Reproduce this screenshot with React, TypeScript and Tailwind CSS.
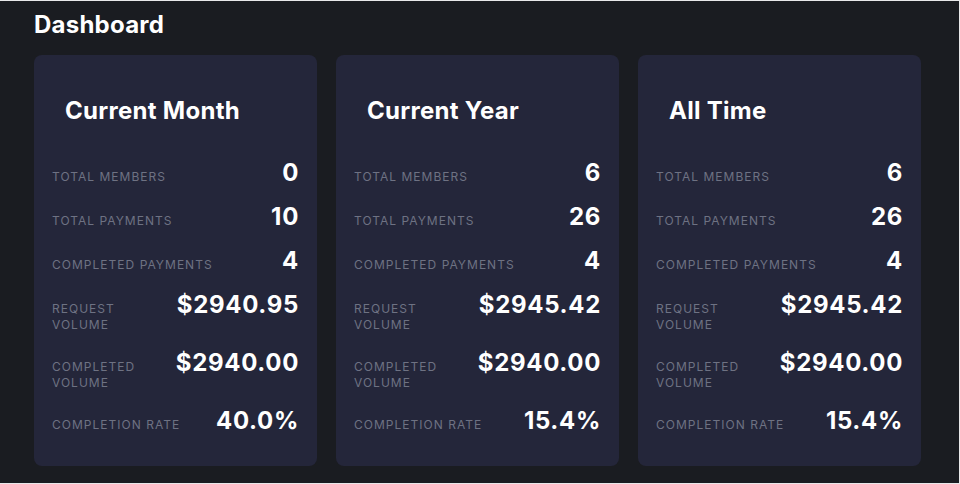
import React from "react";

type Stat = { label: string; value: string };

const cards: { title: string; stats: Stat[] }[] = [
  {
    title: "Current Month",
    stats: [
      { label: "Total Members", value: "0" },
      { label: "Total Payments", value: "10" },
      { label: "Completed Payments", value: "4" },
      { label: "Request Volume", value: "$2940.95" },
      { label: "Completed Volume", value: "$2940.00" },
      { label: "Completion Rate", value: "40.0%" },
    ],
  },
  {
    title: "Current Year",
    stats: [
      { label: "Total Members", value: "6" },
      { label: "Total Payments", value: "26" },
      { label: "Completed Payments", value: "4" },
      { label: "Request Volume", value: "$2945.42" },
      { label: "Completed Volume", value: "$2940.00" },
      { label: "Completion Rate", value: "15.4%" },
    ],
  },
  {
    title: "All Time",
    stats: [
      { label: "Total Members", value: "6" },
      { label: "Total Payments", value: "26" },
      { label: "Completed Payments", value: "4" },
      { label: "Request Volume", value: "$2945.42" },
      { label: "Completed Volume", value: "$2940.00" },
      { label: "Completion Rate", value: "15.4%" },
    ],
  },
];

const StatCard = ({ title, stats }: { title: string; stats: Stat[] }) => {
  return (
    <div className="flex-1 rounded-lg bg-[#24263a] pl-[18px] pr-[18px] pt-[42px] pb-[31px]">
      <h2 className="pl-[13px] text-2xl leading-7 font-bold tracking-[0.012em] text-white">
        {title}
      </h2>
      <div className="mt-[34px] flex flex-col gap-4">
        {stats.map((s) => (
          <div key={s.label} className="flex items-baseline justify-between gap-1">
            <span className="text-xs leading-4 uppercase tracking-[0.085em] text-[#6e7283]">
              {s.label}
            </span>
            <span className="shrink-0 text-2xl leading-7 font-bold tracking-[0.028em] text-white">
              {s.value}
            </span>
          </div>
        ))}
      </div>
    </div>
  );
};

export default function App() {
  return (
    <div
      className="w-[960px] h-[484px] bg-[#e8e8ea] pt-px pr-px"
      style={{ fontFamily: "Inter, 'Noto Sans', sans-serif" }}
    >
      <div className="h-[482px] bg-[#1a1c21] px-[34px] pt-[10px]">
        <h1 className="text-2xl leading-7 font-bold tracking-[0.01em] text-white">
          Dashboard
        </h1>
        <div className="mt-[16px] flex gap-[19px] pr-[4px]">
          {cards.map((c) => (
            <StatCard key={c.title} title={c.title} stats={c.stats} />
          ))}
        </div>
      </div>
    </div>
  );
}
